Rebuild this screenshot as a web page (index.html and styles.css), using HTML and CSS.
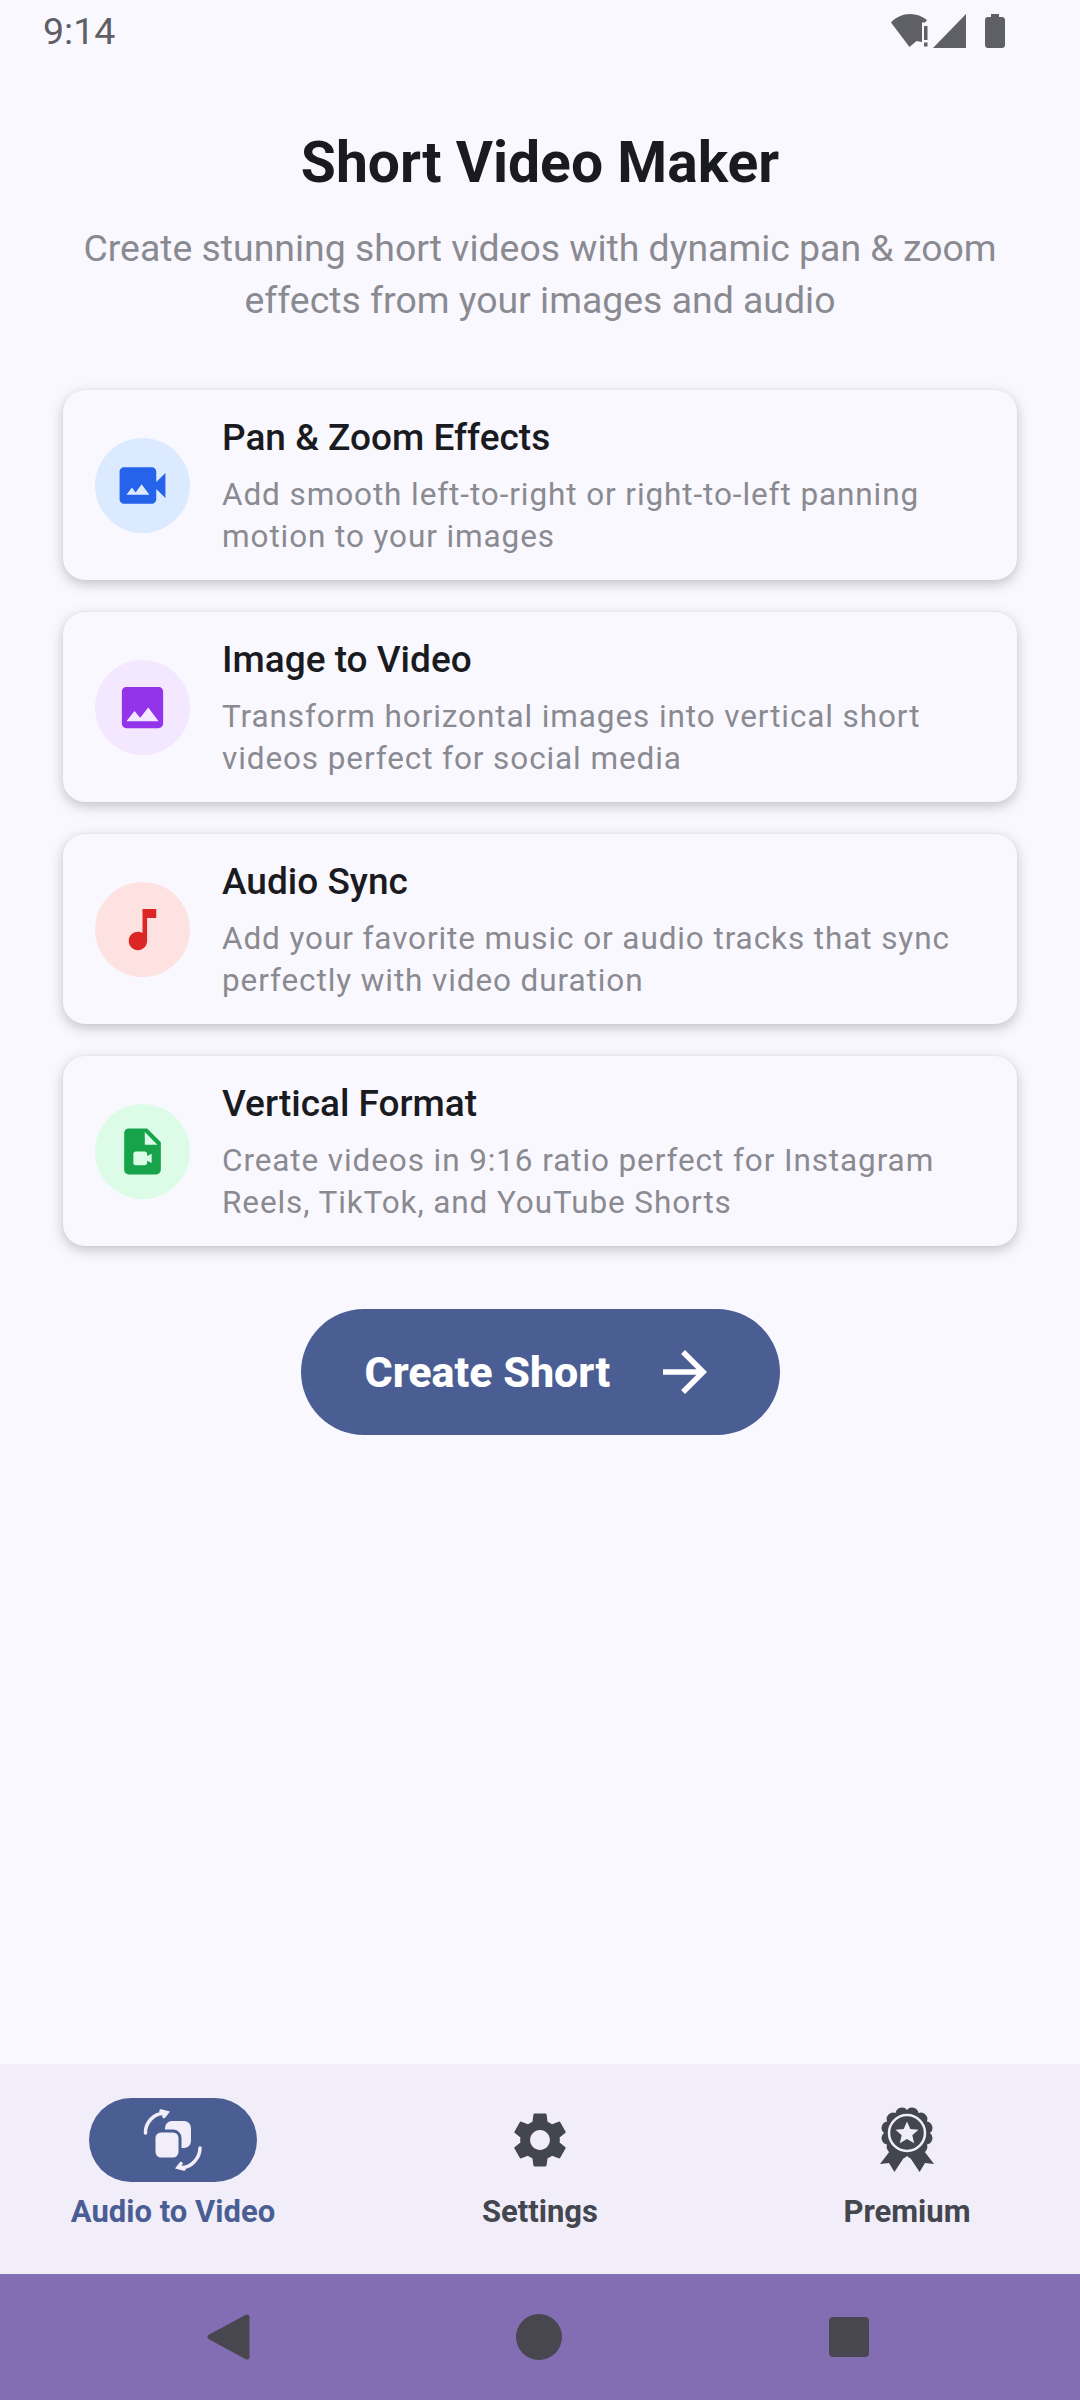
FILE: index.html
```html
<!DOCTYPE html>
<html>

<head>
  <title>Short Video Maker</title>
  <link rel="stylesheet" href="styles.css">
</head>

<body>
  <div class="status-bar">
    <span class="time">9:14</span>
    <div class="status-icons">
      <svg width="41" height="34" viewBox="0 0 41 34">
        <path d="M0 8.5C5 3 12 0 19 0c6.5 0 12 2 17 6l-2 2.5h-3V28l-5.5-1L18.5 33z" />
        <rect x="33" y="12" width="3.5" height="14" />
        <rect x="33" y="28.5" width="3.5" height="4" />
      </svg>
      <svg width="33" height="34" viewBox="0 0 33 34">
        <path d="M33 0v34H0z" />
      </svg>
      <svg class="battery" width="20" height="34" viewBox="0 0 20 34">
        <path d="M6 0h8v3h3c1.7 0 3 1.3 3 3v25c0 1.7-1.3 3-3 3H3c-1.7 0-3-1.3-3-3V6c0-1.7 1.3-3 3-3h3z" />
      </svg>
    </div>
  </div>

  <div class="main">
    <h1>Short Video Maker</h1>
    <p class="subtitle">Create stunning short videos with dynamic pan &amp; zoom effects from your images and audio</p>

    <div class="cards">
      <div class="card">
        <div class="icon-circle blue">
          <svg width="55" height="55" viewBox="0 0 24 24">
            <path d="M18 10.48V6c0-1.1-.9-2-2-2H4c-1.1 0-2 .9-2 2v12c0 1.1.9 2 2 2h12c1.1 0 2-.9 2-2v-4.48l4 3.98v-11l-4 3.98zM5 16l2.38-3.17L9 15l2.62-3.5L15 16H5z" />
          </svg>
        </div>
        <div class="card-text">
          <div class="card-title">Pan &amp; Zoom Effects</div>
          <div class="card-desc">Add smooth left-to-right or right-to-left panning motion to your images</div>
        </div>
      </div>

      <div class="card">
        <div class="icon-circle purple">
          <svg width="55" height="55" viewBox="0 0 24 24">
            <path d="M21 19V5c0-1.1-.9-2-2-2H5c-1.1 0-2 .9-2 2v14c0 1.1.9 2 2 2h14c1.1 0 2-.9 2-2zM8.5 13.5l2.5 3.01L14.5 12l4.5 6H5l3.5-4.5z" />
          </svg>
        </div>
        <div class="card-text">
          <div class="card-title">Image to Video</div>
          <div class="card-desc">Transform horizontal images into vertical short videos perfect for social media</div>
        </div>
      </div>

      <div class="card">
        <div class="icon-circle red">
          <svg width="55" height="55" viewBox="0 0 24 24">
            <path d="M12 3v10.55c-.59-.34-1.27-.55-2-.55-2.21 0-4 1.79-4 4s1.79 4 4 4 4-1.79 4-4V7h4V3h-6z" />
          </svg>
        </div>
        <div class="card-text">
          <div class="card-title">Audio Sync</div>
          <div class="card-desc">Add your favorite music or audio tracks that sync perfectly with video duration</div>
        </div>
      </div>

      <div class="card">
        <div class="icon-circle green">
          <svg width="55" height="55" viewBox="0 0 24 24">
            <path d="M14 2H6.01c-1.1 0-2 .89-2 2L4 20c0 1.1.89 2 1.99 2H18c1.1 0 2-.9 2-2V8l-6-6zm-1 7V3.5L18.5 9H13zm1 5l2-1.06v4.12L14 16v1c0 .55-.45 1-1 1H9c-.55 0-1-.45-1-1v-4c0-.55.45-1 1-1h4c.55 0 1 .45 1 1v1z" />
          </svg>
        </div>
        <div class="card-text">
          <div class="card-title">Vertical Format</div>
          <div class="card-desc">Create videos in 9:16 ratio perfect for Instagram Reels, TikTok, and YouTube Shorts</div>
        </div>
      </div>
    </div>

    <button class="create-btn">
      <span>Create Short</span>
      <svg width="66" height="66" viewBox="0 0 24 24">
        <path d="M12 4l-1.41 1.41L16.17 11H4v2h12.17l-5.58 5.59L12 20l8-8z" />
      </svg>
    </button>
  </div>

  <div class="tab-bar">
    <div class="tab active">
      <div class="tab-icon">
        <svg width="66" height="66" viewBox="0 0 66 66">
          <rect class="back" x="25" y="14" width="26" height="27" rx="7" />
          <rect class="front" x="14" y="24" width="26" height="28" rx="7" />
          <path class="arc" d="M5.5 26C5 16 14 6 24 6.5M21 4l6 1.5-3 4" />
          <path class="arc" d="M60 41c0 10-9 20-19 19.500M44 62l-6-1.500 3-4" />
        </svg>
      </div>
      <span>Audio to Video</span>
    </div>
    <div class="tab">
      <div class="tab-icon">
        <svg width="66" height="66" viewBox="0 0 24 24">
          <path d="M19.14 12.94c.04-.3.06-.61.06-.94 0-.32-.02-.64-.07-.94l2.03-1.58c.18-.14.23-.41.12-.61l-1.92-3.32c-.12-.22-.37-.29-.59-.22l-2.39.96c-.5-.38-1.03-.7-1.62-.94l-.36-2.54c-.04-.24-.24-.41-.48-.41h-3.84c-.24 0-.43.17-.47.41l-.36 2.54c-.59.24-1.13.57-1.62.94l-2.39-.96c-.22-.08-.47 0-.59.22L2.74 8.87c-.12.21-.08.47.12.61l2.03 1.58c-.05.3-.09.63-.09.94s.02.64.07.94l-2.03 1.58c-.18.14-.23.41-.12.61l1.92 3.32c.12.22.37.29.59.22l2.39-.96c.5.38 1.03.7 1.62.94l.36 2.54c.05.24.24.41.48.41h3.84c.24 0 .44-.17.47-.41l.36-2.54c.59-.24 1.13-.56 1.62-.94l2.39.96c.22.08.47 0 .59-.22l1.92-3.32c.12-.22.07-.47-.12-.61l-2.01-1.58zM12 15.6c-1.98 0-3.6-1.62-3.6-3.6s1.62-3.6 3.6-3.6 3.6 1.62 3.6 3.6-1.62 3.6-3.6 3.6z" />
        </svg>
      </div>
      <span>Settings</span>
    </div>
    <div class="tab">
      <div class="tab-icon">
        <svg width="66" height="66" viewBox="0 0 66 66">
          <path d="M19 40L6 57l9-1 5.4 9L33 46l12.6 19 5.4-9 9 1-13-17z" />
          <path d="M56 26A6.5 6.5 0 0 1 52.9 37.5 6.5 6.5 0 0 1 44.5 45.9 6.5 6.5 0 0 1 33 49 6.5 6.5 0 0 1 21.5 45.9 6.5 6.5 0 0 1 13.1 37.5 6.5 6.5 0 0 1 10 26 6.5 6.5 0 0 1 13.1 14.5 6.5 6.5 0 0 1 21.5 6.1 6.5 6.5 0 0 1 33 3 6.5 6.5 0 0 1 44.5 6.1 6.5 6.5 0 0 1 52.9 14.5 6.5 6.5 0 0 1 56 26z" />
          <circle class="ring" cx="33" cy="26" r="18" />
          <path class="star" d="M33 14.5l3.3 7.6 8.2.7-6.2 5.4 1.9 8-7.2-4.300-7.2 4.300 1.900-8-6.200-5.400 8.200-.7z" />
        </svg>
      </div>
      <span>Premium</span>
    </div>
  </div>

  <div class="sys-nav">
    <svg class="back-btn" width="60" height="60" viewBox="0 0 60 60">
      <path d="M49 10L12 30l37 20z" />
    </svg>
    <svg width="60" height="60" viewBox="0 0 60 60">
      <circle cx="30" cy="30" r="23" />
    </svg>
    <svg width="60" height="60" viewBox="0 0 60 60">
      <rect x="10" y="10" width="40" height="40" rx="4" />
    </svg>
  </div>
</body>

</html>
```

FILE: styles.css
```css
* {
  box-sizing: border-box;
}

body {
  margin: 0;
  width: 1080px;
  height: 2400px;
  display: flex;
  flex-direction: column;
  background-color: #faf8ff;
  font-family: Roboto, "Liberation Sans", sans-serif;
}

svg {
  display: block;
}

.status-bar {
  height: 62px;
  padding: 0 75px 0 43px;
  display: flex;
  justify-content: space-between;
  align-items: center;
  color: #5f5f66;
}

.time {
  font-size: 37.5px;
}

.status-icons {
  display: flex;
  align-items: center;
  gap: 1px;
  fill: #5f5f66;
}

.battery {
  margin-left: 18px;
}

.main {
  flex: 1;
  display: flex;
  flex-direction: column;
  align-items: center;
  padding: 0 63px;
}

h1 {
  margin: 68px 0 0;
  font-size: 57px;
  line-height: 66px;
  font-weight: 700;
  color: #1a1b21;
}

.subtitle {
  margin: 26px 0 0;
  width: 954px;
  text-align: center;
  font-size: 37.4px;
  line-height: 52px;
  color: #8a8a91;
}

.cards {
  margin-top: 64px;
  width: 954px;
  display: flex;
  flex-direction: column;
  gap: 32px;
}

.card {
  height: 190px;
  padding: 0 32px;
  display: flex;
  align-items: center;
  gap: 32px;
  border-radius: 22px;
  background-color: #faf8ff;
  box-shadow: 0 4px 13px rgba(0, 0, 0, 0.22), 0 0 2px rgba(0, 0, 0, 0.06);
}

.icon-circle {
  width: 95px;
  height: 95px;
  flex-shrink: 0;
  border-radius: 50%;
  display: flex;
  justify-content: center;
  align-items: center;
}

.blue {
  background-color: #dbeafe;
  fill: #2563eb;
}

.purple {
  background-color: #f3e8ff;
  fill: #9333ea;
}

.red {
  background-color: #fee2e2;
  fill: #dc2626;
}

.green {
  background-color: #dcfce7;
  fill: #16a34a;
}

.card-text {
  padding-top: 3px;
}

.card-title {
  font-size: 37px;
  line-height: 44px;
  font-weight: 500;
  color: #1a1b21;
}

.card-desc {
  margin-top: 14px;
  font-size: 31.5px;
  line-height: 41.5px;
  letter-spacing: 0.9px;
  color: #8a8a91;
}

.create-btn {
  margin-top: 63px;
  height: 126px;
  width: 479px;
  padding: 0 62px 0 64px;
  border: none;
  border-radius: 63px;
  display: flex;
  justify-content: space-between;
  align-items: center;
  background-color: #4a5e94;
  color: white;
  fill: white;
  font-family: inherit;
  font-size: 43px;
  font-weight: 800;
}

.tab-bar {
  height: 210px;
  padding-top: 34px;
  display: flex;
  gap: 21px;
  background-color: #f1eef9;
}

.tab {
  width: 346px;
  display: flex;
  flex-direction: column;
  align-items: center;
  font-size: 31px;
  line-height: 40px;
  font-weight: 700;
  color: #44464f;
  fill: #44464f;
}

.tab-icon {
  width: 168px;
  height: 84px;
  margin-bottom: 10px;
  border-radius: 42px;
  display: flex;
  justify-content: center;
  align-items: center;
}

.active {
  color: #4a5e94;
}

.active .tab-icon {
  background-color: #4a5e94;
}

.back,
.front {
  fill: #f1eef9;
}

.front {
  stroke: #4a5e94;
  stroke-width: 3;
}

.arc {
  fill: none;
  stroke: #f1eef9;
  stroke-width: 3.5;
  stroke-linecap: round;
}

.ring {
  fill: none;
  stroke: #f1eef9;
  stroke-width: 2.5;
}

.star {
  fill: #f1eef9;
}

.sys-nav {
  height: 126px;
  padding: 0 201px 0 198px;
  display: flex;
  justify-content: space-between;
  align-items: center;
  background-color: #846eb3;
  fill: #48474f;
}

.back-btn path {
  stroke: #48474f;
  stroke-width: 5;
  stroke-linejoin: round;
}
```
